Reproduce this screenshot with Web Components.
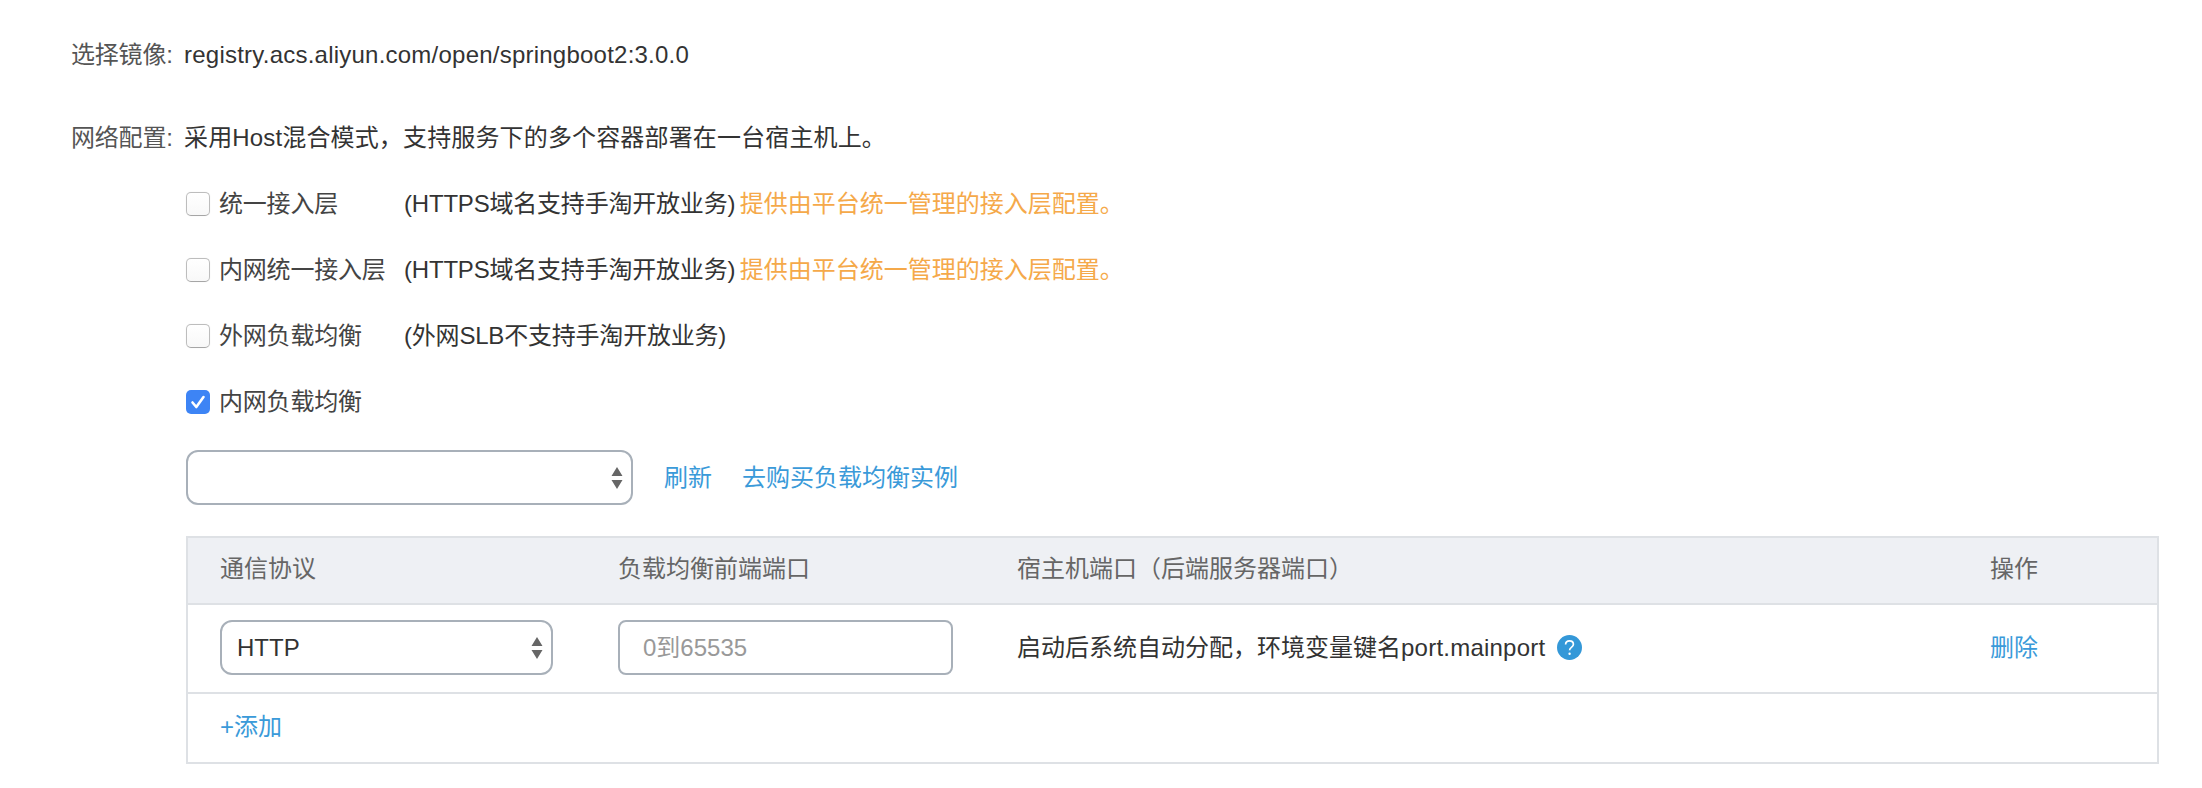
<!DOCTYPE html>
<html lang="zh"><head><meta charset="utf-8"><title>网络配置</title>
<style>
html,body{margin:0;background:#fff}
body{font:24px/1.4 "Liberation Sans","Noto Sans CJK SC",sans-serif;color:#333}
</style></head><body>
<x-page>
  <x-field label="选择镜像:" style="margin-bottom:17px"><span style="letter-spacing:.23px">registry.acs.aliyun.com/open/springboot2:3.0.0</span></x-field>
  <x-field label="网络配置:"><span style="letter-spacing:.15px">采用Host混合模式，支持服务下的多个容器部署在一台宿主机上。</span></x-field>
  <x-option label="统一接入层" note="(HTTPS域名支持手淘开放业务)" hint="提供由平台统一管理的接入层配置。"></x-option>
  <x-option label="内网统一接入层" note="(HTTPS域名支持手淘开放业务)" hint="提供由平台统一管理的接入层配置。"></x-option>
  <x-option label="外网负载均衡" note="(外网SLB不支持手淘开放业务)"></x-option>
  <x-option label="内网负载均衡" checked></x-option>
  <x-lb></x-lb>
  <x-port-table></x-port-table>
</x-page>
<script>
const def=(n,html,init)=>customElements.define(n,class extends HTMLElement{
  connectedCallback(){ if(this.shadowRoot) return; const r=this.attachShadow({mode:'open'}); r.innerHTML=html; init&&init(r,this); }
});
const arrows=`<svg width="14" height="24" viewBox="0 0 14 24"><path d="M7 1l5.5 9h-11zM7 23l-5.5-9h11z" fill="#666"/></svg>`;
def('x-page',`<style>:host{display:block;padding:22px 43px 0 71px;color:#333}</style><slot></slot>`);
def('x-field',`<style>:host{display:flex;align-items:center;height:66px}
 .l{width:113px;flex:none;color:#555;letter-spacing:-.2px}</style><span class="l"></span><slot></slot>`,(r,h)=>{r.querySelector('.l').textContent=h.getAttribute('label')});
def('x-check',`<style>:host{display:block;width:24px;height:24px;box-sizing:border-box;border:1.5px solid #bdbdbd;border-bottom-color:#a6a6a6;border-radius:5px;background:linear-gradient(#fff,#f8f8f8);box-shadow:0 0 1px rgba(0,0,0,.15);flex:none}
 :host([checked]){border:0;background:#3d84f5;box-shadow:none}
 svg{display:none;width:24px;height:24px} :host([checked]) svg{display:block}</style>
 <svg viewBox="0 0 24 24"><path d="M6.5 12.5l3.8 4.5 7.2-10" fill="none" stroke="#fff" stroke-width="2.6" stroke-linecap="round" stroke-linejoin="round"/></svg>`);
def('x-option',`<style>:host{display:flex;align-items:center;height:66px;margin-left:115px;color:#333}
 .lab{width:185px;margin-left:9px;flex:none;color:#444;letter-spacing:-.2px}.note{letter-spacing:-.2px}.hint{color:#f5a94a;margin-left:4.5px}</style>
 <x-check></x-check><span class="lab"></span><span class="note"></span><span class="hint"></span>`,(r,h)=>{
  r.querySelector('.lab').textContent=h.getAttribute('label');
  r.querySelector('.note').textContent=h.getAttribute('note')||'';
  r.querySelector('.hint').textContent=h.getAttribute('hint')||'';
  if(h.hasAttribute('checked')) r.querySelector('x-check').setAttribute('checked','');
});
def('x-select',`<style>:host{display:flex;align-items:center;justify-content:space-between;box-sizing:border-box;height:55px;border:2.5px solid #a8b0b9;border-radius:12px;padding:0 7px 0 15px;background:#fff;color:#333}</style>
 <span><slot></slot></span>${arrows}`);
def('x-lb',`<style>:host{display:flex;align-items:center;margin:15px 0 31px 115px;color:#3a9ad9}
 x-select{width:447px}a{color:inherit;text-decoration:none}.a{margin-left:31px}.b{margin-left:30px}</style>
 <x-select></x-select><a class="a" href="#">刷新</a><a class="b" href="#">去购买负载均衡实例</a>`);
def('x-port-table',`<style>:host{display:block;margin-left:115px;box-sizing:border-box;border:2px solid #dee1e5;color:#333}
 .g{display:grid;grid-template-columns:398px 399px 1fr 199px;align-items:center}
 .g>*{padding-left:32px;box-sizing:border-box;min-width:0}
 .h{height:62px;padding-bottom:3px;background:#eef0f4;color:#666;border-bottom:2px solid #dee1e5}
 .r{height:85px;padding-bottom:2px;border-bottom:2px solid #dee1e5}
 .c1 x-select{width:333px}.c2 .in{width:335px;height:55px;box-sizing:border-box;border:2.5px solid #a8b0b9;border-radius:8px;display:flex;align-items:center;padding-left:23px;color:#999}
 .q{display:inline-block;vertical-align:-4px;margin-left:12px}
 .lat{letter-spacing:.23px}
 a{color:#3a9ad9;text-decoration:none}.add{height:66px;padding-bottom:2px;display:flex;align-items:center;padding-left:32px}</style>
 <div class="g h"><div>通信协议</div><div>负载均衡前端端口</div><div>宿主机端口（后端服务器端口）</div><div>操作</div></div>
 <div class="g r"><div class="c1"><x-select>HTTP</x-select></div><div class="c2"><div class="in">0到65535</div></div>
 <div>启动后系统自动分配，环境变量键名<span class="lat">port.mainport</span><svg class="q" width="25" height="25" viewBox="0 0 25 25"><circle cx="12.5" cy="12.5" r="12.5" fill="#3498d8"/><path d="M8.6 9.6c0-2.4 1.7-3.8 3.9-3.8s3.9 1.3 3.9 3.4c0 1.6-.9 2.4-2 3.2-1.1.8-1.8 1.4-1.8 2.9" fill="none" stroke="#fff" stroke-width="1.7"/><circle cx="12.6" cy="18.8" r="1.2" fill="#fff"/></svg></div>
 <div><a href="#">删除</a></div></div>
 <div class="add"><a href="#">+添加</a></div>`);
</script>
</body></html>
